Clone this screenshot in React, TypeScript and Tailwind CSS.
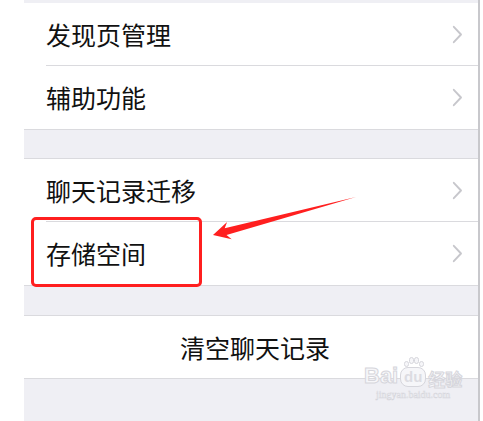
const rows1 = ["发现页管理", "辅助功能"];
const rows2 = ["聊天记录迁移", "存储空间"];

const Chevron = () => (
  <svg width="11" height="19" viewBox="0 0 11 19" className="shrink-0">
    <path d="M1.8 1.8 L9 9.5 L1.8 17.2" fill="none" stroke="#c7c7cc" strokeWidth="1.9" strokeLinecap="round" strokeLinejoin="round" />
  </svg>
);

const Row = ({ label, last }: { label: string; last?: boolean }) => (
  <div className="bg-white pl-[22px]">
    <div className={`h-[63px] flex items-center justify-between pr-[15px] ${last ? "" : "border-b border-[#dadade]"}`}>
      <span className="text-[25px] leading-none text-[#111]">{label}</span>
      <Chevron />
    </div>
  </div>
);

const Watermark = () => (
  <div className="absolute left-[364px] top-[365px] flex flex-col items-center select-none">
    <div className="flex items-end gap-[2px] relative">
      <span className="text-[22px] font-bold leading-none text-[#f6f6f9] [-webkit-text-stroke:1px_#d6d6dc] [font-family:'Liberation_Sans',sans-serif]">Bai</span>
      <span className="relative w-[26px] h-[20px] rounded-[8px] bg-[#f6f6f9] border border-[#d6d6dc] text-[15px] leading-[18px] font-bold text-center text-[#dcdce2] [font-family:'Liberation_Sans',sans-serif]">
        du
        <span className="absolute -top-[13px] left-[3px] w-[20px] h-[12px] flex justify-between items-end">
          <span className="w-[5px] h-[6px] rounded-full border border-[#d6d6dc] bg-[#f6f6f9]" />
          <span className="w-[5px] h-[7px] rounded-full border border-[#d6d6dc] bg-[#f6f6f9] mb-[3px]" />
          <span className="w-[5px] h-[7px] rounded-full border border-[#d6d6dc] bg-[#f6f6f9] mb-[3px]" />
          <span className="w-[5px] h-[6px] rounded-full border border-[#d6d6dc] bg-[#f6f6f9]" />
        </span>
      </span>
      <span className="text-[17px] font-bold leading-none text-[#f6f6f9] [-webkit-text-stroke:1px_#d6d6dc] [font-family:'Noto_Sans_CJK_SC',sans-serif]">经验</span>
    </div>
    <span className="mt-[3px] text-[10px] leading-none text-[#f6f6f9] [-webkit-text-stroke:0.5px_#d6d6dc] [font-family:'Liberation_Serif',serif]">jingyan.baidu.com</span>
  </div>
);

export default function App() {
  return (
    <div className="relative w-[483px] h-[421px] overflow-hidden bg-white flex [font-family:'Noto_Sans_CJK_SC',sans-serif]">
      <div className="w-[24px] shrink-0 bg-white" />
      <div className="w-[456px] bg-[#efeff4] border-r-2 border-[#c8c8cc] flex flex-col">
        <div className="h-[3px] shrink-0" />
        <div className="border-b border-[#dadade]">
          {rows1.map((r, i) => (
            <Row key={r} label={r} last={i === rows1.length - 1} />
          ))}
        </div>
        <div className="h-[28px] shrink-0" />
        <div className="border-y border-[#dadade]">
          {rows2.map((r, i) => (
            <Row key={r} label={r} last={i === rows2.length - 1} />
          ))}
        </div>
        <div className="h-[29px] shrink-0" />
        <div className="border-y border-[#dadade] bg-white h-[64px] shrink-0 flex items-center justify-center pl-[8px]">
          <span className="text-[25px] leading-none text-[#111]">清空聊天记录</span>
        </div>
      </div>
      <div className="w-[1px] bg-white" />

      {/* annotation */}
      <div className="absolute left-[31px] top-[217px] w-[171px] h-[70px] border-[3px] border-[#ff1f1f] rounded-[5px]" />
      <svg className="absolute inset-0" width="483" height="421" viewBox="0 0 483 421">
        <polygon
          points="356,197 224.7,228.3 227.1,221.9 213,235 231.7,239.3 226.5,235.1"
          fill="#ff1f1f"
        />
      </svg>
      <Watermark />
    </div>
  );
}
